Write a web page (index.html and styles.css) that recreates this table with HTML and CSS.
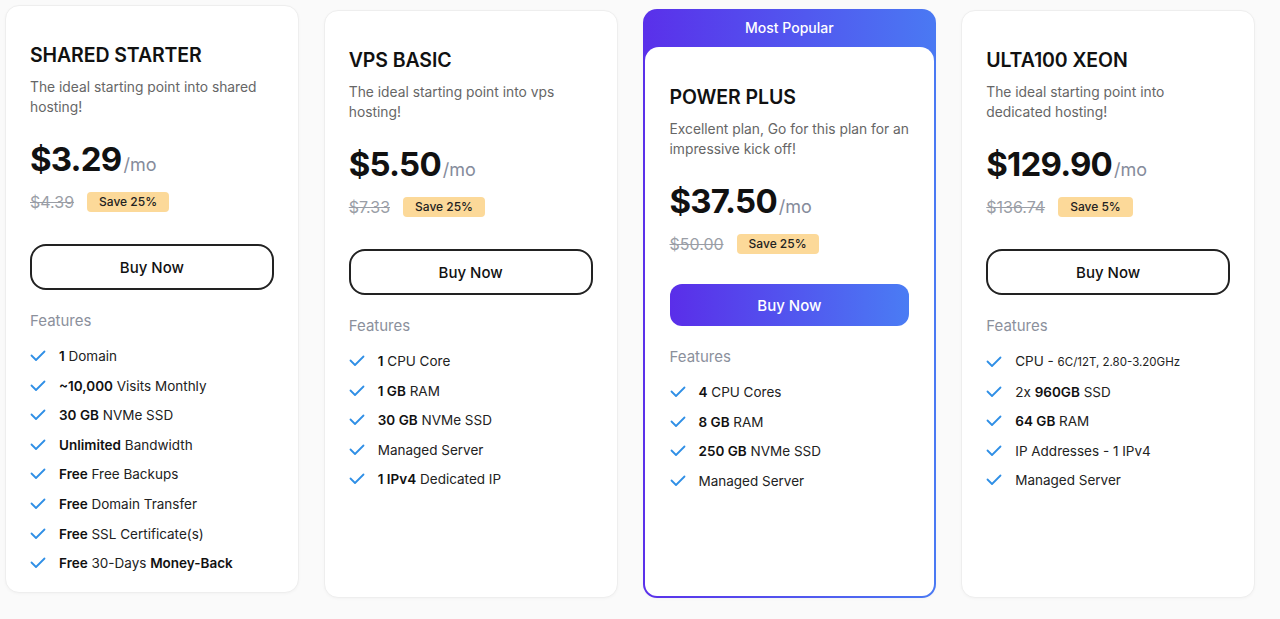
FILE: index.html
```html
<!DOCTYPE html>
<html lang="en">
<head>
  <meta charset="UTF-8">
  <meta name="viewport" content="width=device-width, initial-scale=1.0">
  <title>Hosting Plans</title>
  <link rel="stylesheet" href="styles.css">
</head>
<body>

<div class="plans">

  <div class="plan raised">
    <h2 class="plan-name">SHARED STARTER</h2>
    <p class="plan-desc">The ideal starting point into shared hosting!</p>
    <div class="price"><span class="amount">$3.29</span><span class="per">/mo</span></div>
    <div class="discount"><s class="old">$4.39</s><span class="save">Save 25%</span></div>
    <button class="buy">Buy Now</button>
    <div class="features-title">Features</div>
    <ul class="features">
      <li><svg class="check" viewBox="0 0 16 12"><path d="M1.5 5.5 L6 10 L14.5 1.5"/></svg><span><b>1</b> Domain</span></li>
      <li><svg class="check" viewBox="0 0 16 12"><path d="M1.5 5.5 L6 10 L14.5 1.5"/></svg><span><b>~10,000</b> Visits Monthly</span></li>
      <li><svg class="check" viewBox="0 0 16 12"><path d="M1.5 5.5 L6 10 L14.5 1.5"/></svg><span><b>30 GB</b> NVMe SSD</span></li>
      <li><svg class="check" viewBox="0 0 16 12"><path d="M1.5 5.5 L6 10 L14.5 1.5"/></svg><span><b>Unlimited</b> Bandwidth</span></li>
      <li><svg class="check" viewBox="0 0 16 12"><path d="M1.5 5.5 L6 10 L14.5 1.5"/></svg><span><b>Free</b> Free Backups</span></li>
      <li><svg class="check" viewBox="0 0 16 12"><path d="M1.5 5.5 L6 10 L14.5 1.5"/></svg><span><b>Free</b> Domain Transfer</span></li>
      <li><svg class="check" viewBox="0 0 16 12"><path d="M1.5 5.5 L6 10 L14.5 1.5"/></svg><span><b>Free</b> SSL Certificate(s)</span></li>
      <li><svg class="check" viewBox="0 0 16 12"><path d="M1.5 5.5 L6 10 L14.5 1.5"/></svg><span><b>Free</b> 30-Days <b>Money-Back</b></span></li>
    </ul>
  </div>

  <div class="plan">
    <h2 class="plan-name">VPS BASIC</h2>
    <p class="plan-desc">The ideal starting point into vps hosting!</p>
    <div class="price"><span class="amount">$5.50</span><span class="per">/mo</span></div>
    <div class="discount"><s class="old">$7.33</s><span class="save">Save 25%</span></div>
    <button class="buy">Buy Now</button>
    <div class="features-title">Features</div>
    <ul class="features">
      <li><svg class="check" viewBox="0 0 16 12"><path d="M1.5 5.5 L6 10 L14.5 1.5"/></svg><span><b>1</b> CPU Core</span></li>
      <li><svg class="check" viewBox="0 0 16 12"><path d="M1.5 5.5 L6 10 L14.5 1.5"/></svg><span><b>1 GB</b> RAM</span></li>
      <li><svg class="check" viewBox="0 0 16 12"><path d="M1.5 5.5 L6 10 L14.5 1.5"/></svg><span><b>30 GB</b> NVMe SSD</span></li>
      <li><svg class="check" viewBox="0 0 16 12"><path d="M1.5 5.5 L6 10 L14.5 1.5"/></svg><span>Managed Server</span></li>
      <li><svg class="check" viewBox="0 0 16 12"><path d="M1.5 5.5 L6 10 L14.5 1.5"/></svg><span><b>1 IPv4</b> Dedicated IP</span></li>
    </ul>
  </div>

  <div class="plan popular">
    <div class="popular-tag">Most Popular</div>
    <div class="popular-body">
      <h2 class="plan-name">POWER PLUS</h2>
      <p class="plan-desc">Excellent plan, Go for this plan for an impressive kick off!</p>
      <div class="price"><span class="amount">$37.50</span><span class="per">/mo</span></div>
      <div class="discount"><s class="old">$50.00</s><span class="save">Save 25%</span></div>
      <button class="buy buy-primary">Buy Now</button>
      <div class="features-title">Features</div>
      <ul class="features">
        <li><svg class="check" viewBox="0 0 16 12"><path d="M1.5 5.5 L6 10 L14.5 1.5"/></svg><span><b>4</b> CPU Cores</span></li>
        <li><svg class="check" viewBox="0 0 16 12"><path d="M1.5 5.5 L6 10 L14.5 1.5"/></svg><span><b>8 GB</b> RAM</span></li>
        <li><svg class="check" viewBox="0 0 16 12"><path d="M1.5 5.5 L6 10 L14.5 1.5"/></svg><span><b>250 GB</b> NVMe SSD</span></li>
        <li><svg class="check" viewBox="0 0 16 12"><path d="M1.5 5.5 L6 10 L14.5 1.5"/></svg><span>Managed Server</span></li>
      </ul>
    </div>
  </div>

  <div class="plan">
    <h2 class="plan-name">ULTA100 XEON</h2>
    <p class="plan-desc">The ideal starting point into dedicated hosting!</p>
    <div class="price"><span class="amount">$129.90</span><span class="per">/mo</span></div>
    <div class="discount"><s class="old">$136.74</s><span class="save">Save 5%</span></div>
    <button class="buy">Buy Now</button>
    <div class="features-title">Features</div>
    <ul class="features">
      <li><svg class="check" viewBox="0 0 16 12"><path d="M1.5 5.5 L6 10 L14.5 1.5"/></svg><span>CPU - <small>6C/12T, 2.80-3.20GHz</small></span></li>
      <li><svg class="check" viewBox="0 0 16 12"><path d="M1.5 5.5 L6 10 L14.5 1.5"/></svg><span>2x <b>960GB</b> SSD</span></li>
      <li><svg class="check" viewBox="0 0 16 12"><path d="M1.5 5.5 L6 10 L14.5 1.5"/></svg><span><b>64 GB</b> RAM</span></li>
      <li><svg class="check" viewBox="0 0 16 12"><path d="M1.5 5.5 L6 10 L14.5 1.5"/></svg><span>IP Addresses - 1 IPv4</span></li>
      <li><svg class="check" viewBox="0 0 16 12"><path d="M1.5 5.5 L6 10 L14.5 1.5"/></svg><span>Managed Server</span></li>
    </ul>
  </div>

</div>

</body>
</html>
```

FILE: styles.css
```css
body {
  margin: 0;
  background: #fafafa;
  font-family: Inter, "Noto Sans", sans-serif;
  color: #111;
}

.plans {
  display: grid;
  grid-template-columns: repeat(4, 1fr);
  gap: 25px;
  padding: 10px 25px 20px 5px;
}

.plan {
  background: #fff;
  border: 1px solid #eeeeee;
  border-radius: 14px;
  padding: 35px 24px 19px;
  box-shadow: 0 1px 3px rgba(0, 0, 0, 0.03);
}

.plan.raised {
  transform: translateY(-5px);
}

.plan-name {
  margin: 0;
  font-size: 19.5px;
  line-height: 28px;
  font-weight: 600;
  letter-spacing: -0.1px;
}

.plan-desc {
  margin: 8px 0 0;
  font-size: 13.8px;
  line-height: 20px;
  color: #666;
}

.price {
  margin-top: 22px;
  display: flex;
  align-items: baseline;
  gap: 2px;
}

.amount {
  font-size: 33px;
  line-height: 40px;
  font-weight: 700;
  letter-spacing: -0.8px;
}

.per {
  font-size: 18px;
  color: #858b9b;
}

.discount {
  margin-top: 11px;
  display: flex;
  align-items: center;
  gap: 13px;
  height: 24px;
}

.old {
  font-size: 16px;
  color: #9a9ea6;
}

.save {
  background: #fcd999;
  border-radius: 4px;
  padding: 0 12px;
  font-size: 12px;
  line-height: 20px;
  font-weight: 500;
  color: #222;
}

.buy {
  display: block;
  width: 100%;
  margin-top: 30px;
  height: 46px;
  border: 2px solid #222;
  border-radius: 16px;
  background: #fff;
  font-family: inherit;
  font-size: 15px;
  font-weight: 500;
  color: #111;
  cursor: pointer;
}

.features-title {
  margin-top: 20px;
  font-size: 15px;
  line-height: 22px;
  color: #8b909c;
}

.features {
  list-style: none;
  margin: 14px 0 0;
  padding: 0;
  display: flex;
  flex-direction: column;
  gap: 9.6px;
}

.features li {
  display: flex;
  align-items: center;
  gap: 13px;
  font-size: 13.5px;
  line-height: 20px;
  color: #222;
}

.features b {
  font-weight: 600;
  color: #111;
}

.features small {
  font-size: 11.5px;
}

.check {
  width: 16px;
  height: 12px;
  flex: none;
  fill: none;
  stroke: #2f8fe6;
  stroke-width: 1.8;
  stroke-linecap: round;
  stroke-linejoin: round;
}

/* most popular card */
.plan.popular {
  display: flex;
  flex-direction: column;
  padding: 0 2px 2px;
  margin-top: -1px;
  border: none;
  background: linear-gradient(90deg, #5a30ea, #4a79f3);
}

.popular-tag {
  height: 38px;
  line-height: 38px;
  text-align: center;
  color: #fff;
  font-size: 14px;
  font-weight: 500;
}

.popular-body {
  flex: 1;
  background: #fff;
  border-radius: 14px 14px 12px 12px;
  padding: 36px 25px 20px;
}

.buy-primary {
  height: 42px;
  margin-top: 28px;
  border: none;
  border-radius: 12px;
  color: #fff;
  background: linear-gradient(90deg, #5a2ee9, #4a7cf4);
}
```
